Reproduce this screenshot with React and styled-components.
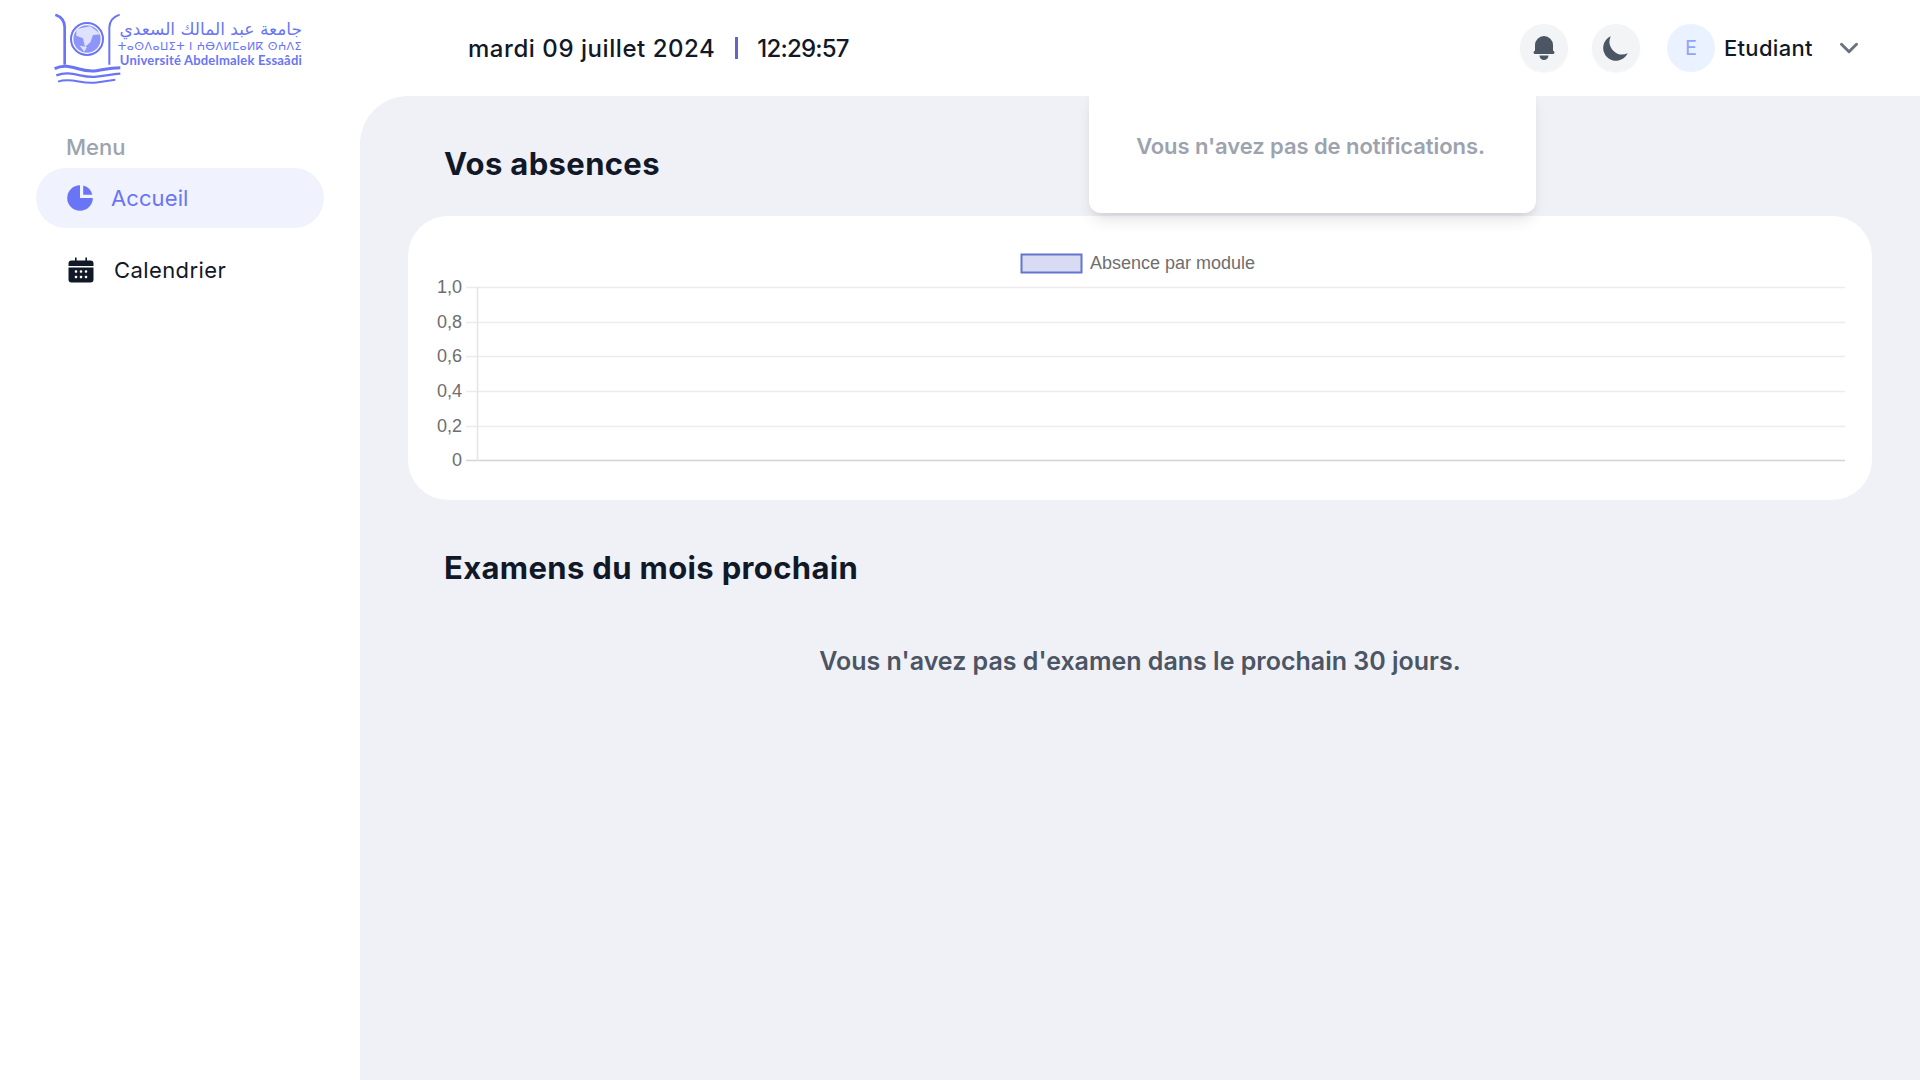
import React from 'react';
import styled, { createGlobalStyle } from 'styled-components';
import { HiBell, HiMoon, HiChartPie } from 'react-icons/hi';
import { ChevronDown } from 'lucide-react';

const GlobalStyle = createGlobalStyle`
  html, body {
    margin: 0;
    height: 100%;
    overflow: hidden;
    background: #fff;
    font-family: Inter, "Noto Sans", sans-serif;
  }
  * { box-sizing: border-box; }
`;

const Page = styled.div`
  width: 1920px;
  height: 1080px;
  display: flex;
  flex-direction: column;
  background: #fff;
`;

const Header = styled.header`
  position: relative;
  z-index: 2;
  height: 96px;
  flex: none;
  display: flex;
  align-items: center;
  padding-left: 53px;
  padding-right: 56px;
`;

const LogoWrap = styled.div`
  width: 415px;
  display: flex;
  align-items: center;
  color: #6a75f6;
`;

const LogoMarkSvg = styled.svg`
  flex: none;
  margin-top: 4px;
`;

const LogoText = styled.div`
  display: flex;
  flex-direction: column;
  align-items: flex-end;
  width: 182px;
  margin-left: -4px;
  margin-top: -11px;
`;

const LogoArabic = styled.div`
  font-family: "DejaVu Sans", sans-serif;
  font-size: 17px;
  line-height: 22px;
  white-space: nowrap;
`;

const LogoTifinagh = styled.div`
  font-family: "DejaVu Sans", sans-serif;
  font-size: 11px;
  line-height: 13px;
  white-space: nowrap;
  letter-spacing: 0.45px;
`;

const LogoLatin = styled.div`
  font-family: Lato, sans-serif;
  font-weight: 700;
  font-size: 13px;
  line-height: 15px;
  letter-spacing: 0.2px;
  white-space: nowrap;
`;

const DateBox = styled.div`
  display: flex;
  align-items: center;
  font-size: 24px;
  font-weight: 500;
  color: #111827;
`;

const DateText = styled.span`
  letter-spacing: ${(p) => p.$spacing}px;
`;

const Divider = styled.span`
  width: 3px;
  height: 22px;
  background: #6366c9;
  margin: 0 19px 0 20px;
`;

const Actions = styled.div`
  margin-left: auto;
  display: flex;
  align-items: center;
`;

const RoundButton = styled.button`
  width: 48px;
  height: 48px;
  border: 0;
  border-radius: 50%;
  padding: 0;
  margin-right: 24px;
  background: #f3f4f6;
  color: #4b5563;
  display: flex;
  align-items: center;
  justify-content: center;
  box-shadow: 0 1px 2px rgba(0, 0, 0, 0.04);
`;

const Avatar = styled.div`
  width: 48px;
  height: 48px;
  margin-left: 3px;
  border-radius: 50%;
  background: #ebf2ff;
  color: #8fa5fb;
  font-size: 20px;
  display: flex;
  align-items: center;
  justify-content: center;
`;

const UserName = styled.span`
  margin-left: 9px;
  width: 110px;
  font-size: 22px;
  font-weight: 500;
  letter-spacing: 0.3px;
  color: #111827;
`;

const Popover = styled.div`
  position: absolute;
  top: 90px;
  left: 1089px;
  width: 447px;
  height: 123px;
  padding-top: 56px;
  padding-right: 4px;
  text-align: center;
  background: #fff;
  border-radius: 0 0 12px 12px;
  box-shadow: 0 10px 15px -3px rgba(0, 0, 0, 0.1), 0 4px 6px -2px rgba(0, 0, 0, 0.05);
  color: #9ca3af;
  font-size: 22px;
  font-weight: 600;
  letter-spacing: -0.08px;
  line-height: 0;
  clip-path: inset(6px -40px -40px -40px);
`;

const Body = styled.div`
  flex: 1;
  display: flex;
  min-height: 0;
`;

const Sidebar = styled.aside`
  width: 360px;
  flex: none;
  padding: 37px 36px 0;
`;

const MenuLabel = styled.div`
  padding-left: 30px;
  font-size: 22px;
  line-height: 28px;
  font-weight: 500;
  color: #9ca3af;
  margin-bottom: 7px;
`;

const NavItem = styled.a`
  display: flex;
  align-items: center;
  height: 60px;
  border-radius: 30px;
  padding-left: ${(p) => (p.$active ? 28 : 32)}px;
  margin-bottom: 12px;
  gap: ${(p) => (p.$active ? 15 : 20)}px;
  background: ${(p) => (p.$active ? '#f0f2fd' : 'transparent')};
  color: ${(p) => (p.$active ? '#6a75f6' : '#111827')};
  font-size: 22px;
  letter-spacing: ${(p) => (p.$active ? 0.1 : 0.4)}px;
`;

const Main = styled.main`
  flex: 1;
  background: #f0f1f7;
  border-top-left-radius: 48px;
  padding: 48px 48px 0;
`;

const SectionTitle = styled.h2`
  margin: 0 0 ${(p) => p.$gap}px 36px;
  height: 40px;
  font-size: 31px;
  line-height: 40px;
  font-weight: 700;
  letter-spacing: 0.35px;
  color: #111827;
`;

const Card = styled.section`
  height: 284px;
  margin-bottom: 48px;
  background: #fff;
  border-radius: 40px;
`;

const EmptyExam = styled.p`
  margin: 0;
  text-align: center;
  font-size: 25px;
  line-height: 36px;
  font-weight: 600;
  color: #4b5563;
`;

const ChartSvg = styled.svg`
  display: block;
`;

const ticks = [
  { label: '1,0', y: 72 },
  { label: '0,8', y: 107 },
  { label: '0,6', y: 141 },
  { label: '0,4', y: 176 },
  { label: '0,2', y: 211 },
  { label: '0', y: 245 },
];

function LogoMark() {
  return (
    <LogoMarkSvg width="71" height="74" viewBox="70 40 213 222" fill="none" stroke="#6a75f6">
      <path d="M77 45c18 6 28 16 28 38v112" strokeWidth="8" />
      <path d="M270 45c-18 6-30 16-31 38v112" strokeWidth="6" />
      <circle cx="172" cy="118" r="48" strokeWidth="6" />
      <circle cx="172" cy="118" r="41" fill="#8d96f8" stroke="none" />
      <path
        d="M140 88l42-8 32 24-24 2-8 22-16 14-6-26-20-8zM150 138l14 18 8-14z"
        fill="#dfe2fd"
        stroke="none"
      />
      <path d="M75 207c45-22 75 14 125 6 30-5 50-9 72-9" strokeWidth="9" />
      <path d="M80 227c45-18 75 10 120 4 30-4 50-7 72-9" strokeWidth="7" />
      <path d="M85 246c40-14 70 8 110 3 25-3 45-7 62-9" strokeWidth="6" />
    </LogoMarkSvg>
  );
}

function CalendarIcon() {
  return (
    <svg width="26" height="26" viewBox="0 0 26 26">
      <path
        d="M7 0.500h1.600v3H17.400v-3H19v3h3.500A3 3 0 0 1 25.500 6.500V9H0.500V6.500A3 3 0 0 1 3.500 3.500H7zM0.500 10.500h25v12a3 3 0 0 1-3 3h-19a3 3 0 0 1-3-3z"
        fill="#111827"
      />
      {[8, 13, 18].flatMap((x) =>
        [14.5, 20].map((y) => <rect key={`${x}-${y}`} x={x - 1.2} y={y - 1.2} width="2.400" height="2.400" rx="0.800" fill="#fff" />),
      )}
    </svg>
  );
}

function AbsenceChart() {
  return (
    <ChartSvg width="1464" height="284" viewBox="0 0 1464 284">
      <rect x="613.500" y="38.500" width="60" height="18" fill="#d8dbf1" stroke="#6375cf" strokeWidth="2" />
      <text x="682" y="53" fontFamily="Liberation Sans" fontSize="18" fill="#6e6e6e" textLength="165" lengthAdjust="spacingAndGlyphs">
        Absence par module
      </text>
      {ticks.map(({ label, y }) => (
        <g key={label}>
          <line x1="58" x2="1437" y1={y - 0.5} y2={y - 0.5} stroke={label === '0' ? '#d4d4d4' : '#ececec'} strokeWidth="1.500" />
          <text x="54" y={y + 5} textAnchor="end" fontFamily="Liberation Sans" fontSize="18" fill="#6e6e6e">
            {label}
          </text>
        </g>
      ))}
      <line x1="69.500" x2="69.500" y1="71" y2="245" stroke="#e4e4e4" strokeWidth="1.500" />
    </ChartSvg>
  );
}

export default function App() {
  return (
    <Page>
      <GlobalStyle />
      <Header>
        <LogoWrap>
          <LogoMark />
          <LogoText>
            <LogoArabic>جامعة عبد المالك السعدي</LogoArabic>
            <LogoTifinagh>ⵜⴰⵙⴷⴰⵡⵉⵜ ⵏ ⵄⴱⴷⵍⵎⴰⵍⴽ ⵙⵄⴷⵉ</LogoTifinagh>
            <LogoLatin>Université Abdelmalek Essaâdi</LogoLatin>
          </LogoText>
        </LogoWrap>
        <DateBox>
          <DateText $spacing={0.55}>mardi 09 juillet 2024</DateText>
          <Divider />
          <DateText $spacing={-0.8}>12:29:57</DateText>
        </DateBox>
        <Actions>
          <RoundButton>
            <HiBell size={30} />
          </RoundButton>
          <RoundButton>
            <HiMoon size={32} />
          </RoundButton>
          <Avatar>E</Avatar>
          <UserName>Etudiant</UserName>
          <ChevronDown size={30} color="#6b7280" strokeWidth={2.4} />
        </Actions>
        <Popover>Vous n'avez pas de notifications.</Popover>
      </Header>
      <Body>
        <Sidebar>
          <MenuLabel>Menu</MenuLabel>
          <NavItem $active>
            <HiChartPie size={32} />
            Accueil
          </NavItem>
          <NavItem>
            <CalendarIcon />
            Calendrier
          </NavItem>
        </Sidebar>
        <Main>
          <SectionTitle $gap={32}>Vos absences</SectionTitle>
          <Card>
            <AbsenceChart />
          </Card>
          <SectionTitle $gap={55}>Examens du mois prochain</SectionTitle>
          <EmptyExam>Vous n'avez pas d'examen dans le prochain 30 jours.</EmptyExam>
        </Main>
      </Body>
    </Page>
  );
}
